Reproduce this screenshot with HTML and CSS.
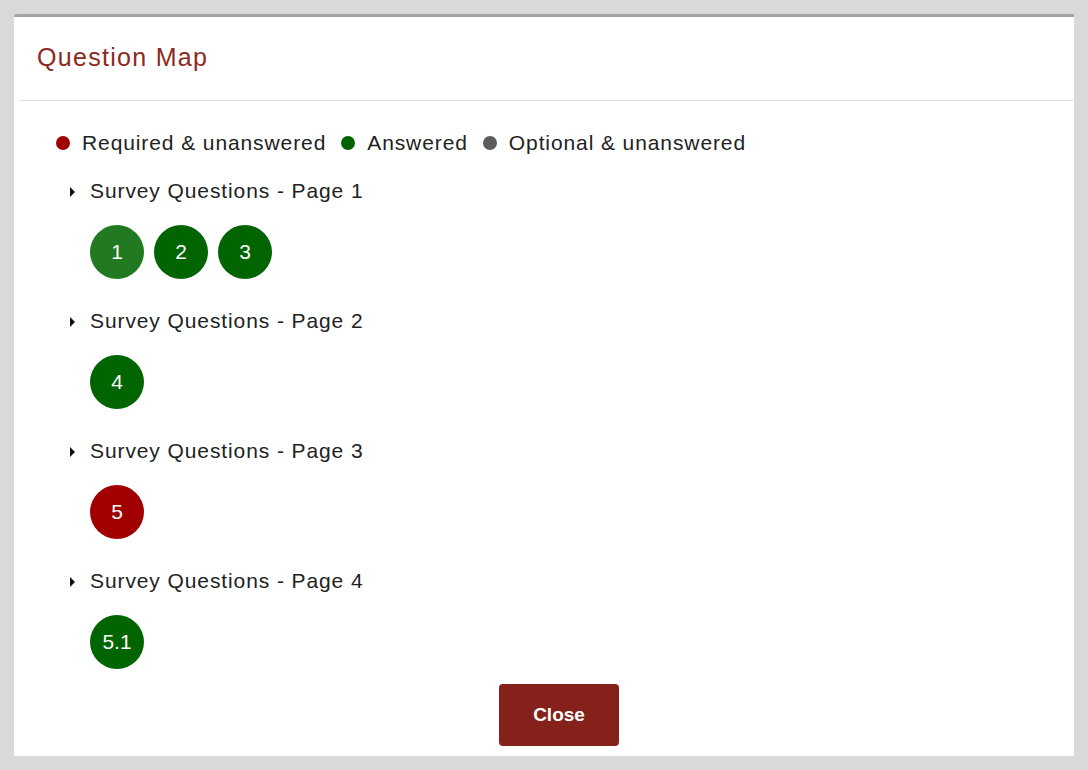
FILE: index.html
```html
<!DOCTYPE html>
<html lang="en">
<head>
<meta charset="utf-8">
<title>Question Map</title>
<link rel="stylesheet" href="styles.css">
</head>
<body>
<div class="dialog">
  <div class="dialog-header">
    <h1 class="dialog-title">Question Map</h1>
  </div>
  <div class="dialog-body">
    <div class="legend">
      <span class="legend-item"><span class="dot dot-required"></span>Required &amp; unanswered</span>
      <span class="legend-item"><span class="dot dot-answered"></span>Answered</span>
      <span class="legend-item"><span class="dot dot-optional"></span>Optional &amp; unanswered</span>
    </div>

    <div class="section">
      <div class="section-title"><span class="caret"></span>Survey Questions - Page 1</div>
      <div class="bubbles">
        <span class="bubble answered focus">1</span>
        <span class="bubble answered">2</span>
        <span class="bubble answered">3</span>
      </div>
    </div>

    <div class="section">
      <div class="section-title"><span class="caret"></span>Survey Questions - Page 2</div>
      <div class="bubbles">
        <span class="bubble answered">4</span>
      </div>
    </div>

    <div class="section">
      <div class="section-title"><span class="caret"></span>Survey Questions - Page 3</div>
      <div class="bubbles">
        <span class="bubble required">5</span>
      </div>
    </div>

    <div class="section">
      <div class="section-title"><span class="caret"></span>Survey Questions - Page 4</div>
      <div class="bubbles">
        <span class="bubble answered">5.1</span>
      </div>
    </div>

    <div class="footer">
      <button class="close-btn" type="button">Close</button>
    </div>
  </div>
</div>
</body>
</html>
```

FILE: styles.css
```css
html, body {
  margin: 0;
  padding: 0;
}

body {
  background: #d9d9d9;
  width: 1088px;
  height: 770px;
  padding: 14px 0 0 14px;
  box-sizing: border-box;
  font-family: "Liberation Sans", Arial, sans-serif;
  overflow: hidden;
}

.dialog {
  width: 1060px;
  height: 742px;
  background: #ffffff;
  border-top: 3px solid #a3a3a3;
  border-radius: 3px 0 0 0;
  box-sizing: border-box;
  display: flex;
  flex-direction: column;
}

.dialog-header {
  height: 84px;
  margin-left: 5px;
  border-bottom: 1px solid #e0e0e0;
  display: flex;
  align-items: center;
  padding-left: 18px;
  padding-bottom: 2px;
  box-sizing: border-box;
}

.dialog-title {
  margin: 0;
  font-weight: normal;
  font-size: 25px;
  letter-spacing: 1.3px;
  color: #8b2a1e;
}

.dialog-body {
  flex: 1;
  display: flex;
  flex-direction: column;
  padding: 28px 0 0 42px;
  color: #222222;
  font-size: 21px;
  letter-spacing: 0.9px;
}

.legend {
  display: flex;
  height: 28px;
  align-items: center;
  gap: 15px;
}

.legend-item {
  display: flex;
  align-items: center;
}

.dot {
  width: 14px;
  height: 14px;
  border-radius: 50%;
  margin-right: 12px;
  display: inline-block;
}

.dot-required { background: #a10000; }
.dot-answered { background: #006400; }
.dot-optional { background: #5c5c5c; }

.section {
  margin-top: 20px;
  padding-left: 34px;
}

.section + .section {
  margin-top: 28px;
}

.section-title {
  height: 28px;
  display: flex;
  align-items: center;
}

.caret {
  width: 0;
  height: 0;
  border-top: 5px solid transparent;
  border-bottom: 5px solid transparent;
  border-left: 5px solid #111111;
  margin-left: -20px;
  margin-right: 15px;
  margin-top: 2px;
}

.bubbles {
  display: flex;
  gap: 10px;
  margin-top: 20px;
}

.bubble {
  width: 54px;
  height: 54px;
  border-radius: 50%;
  color: #ffffff;
  display: flex;
  align-items: center;
  justify-content: center;
  font-size: 21px;
  letter-spacing: 0;
}

.bubble.answered { background: #006400; }
.bubble.required { background: #a10000; }
.bubble.focus { background: #217a21; }

.footer {
  display: flex;
  justify-content: center;
  margin-top: 15px;
  margin-left: -42px;
  padding-left: 30px;
}

.close-btn {
  width: 120px;
  height: 62px;
  border: none;
  border-radius: 4px;
  background: #84211a;
  color: #ffffff;
  font-family: "Liberation Sans", Arial, sans-serif;
  font-weight: bold;
  font-size: 19px;
}
```
